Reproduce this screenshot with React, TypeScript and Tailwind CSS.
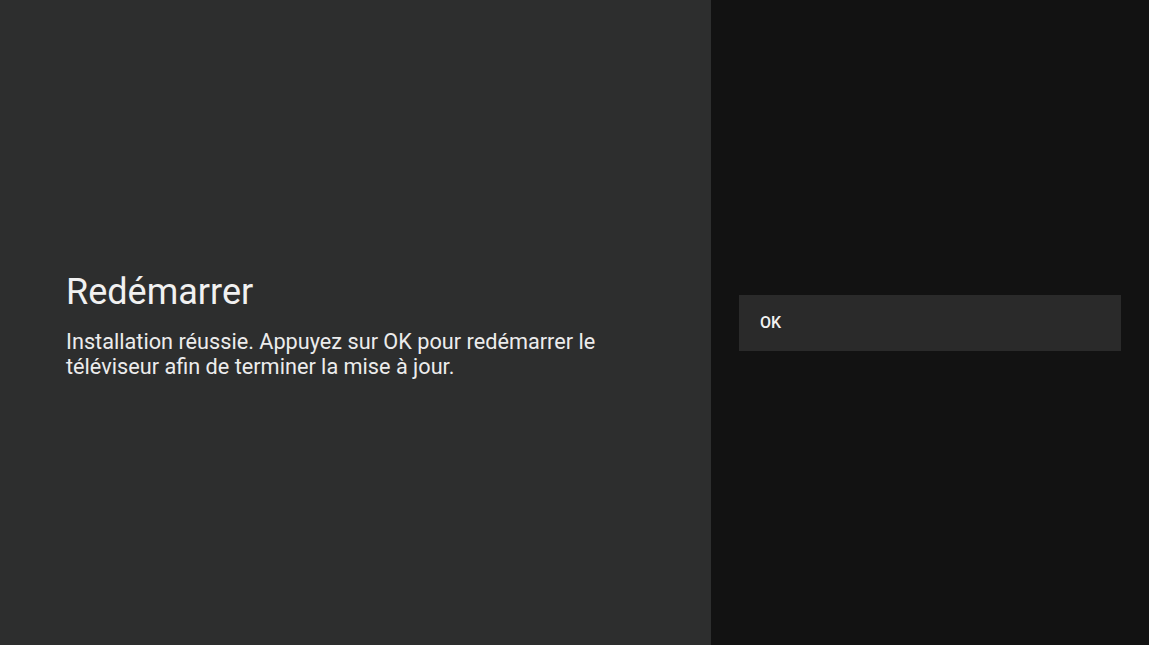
export default function App() {
  return (
    <div className="flex h-[645px] w-[1149px] overflow-hidden font-['Roboto',sans-serif] text-white">
      {/* guidance panel */}
      <div className="flex w-[711px] flex-col justify-center bg-[#2d2e2e] pl-[66px] pr-[100px] pt-[3px]">
        <h1 className="text-[36px] leading-[44px] text-[#f1f1f1]">Redémarrer</h1>
        <p className="mt-[15px] text-[21.7px] leading-[25px] text-[#ececec]">
          Installation réussie. Appuyez sur OK pour redémarrer le téléviseur afin de terminer la mise à jour.
        </p>
      </div>

      {/* actions */}
      <div className="flex flex-1 flex-col justify-center bg-[#121212] pl-[28px] pr-[28px]">
        <button className="flex h-[56px] items-center bg-[#2a2a2a] px-[21px] text-left text-[16px] font-medium text-[#f2f2f2]">
          OK
        </button>
      </div>
    </div>
  );
}
